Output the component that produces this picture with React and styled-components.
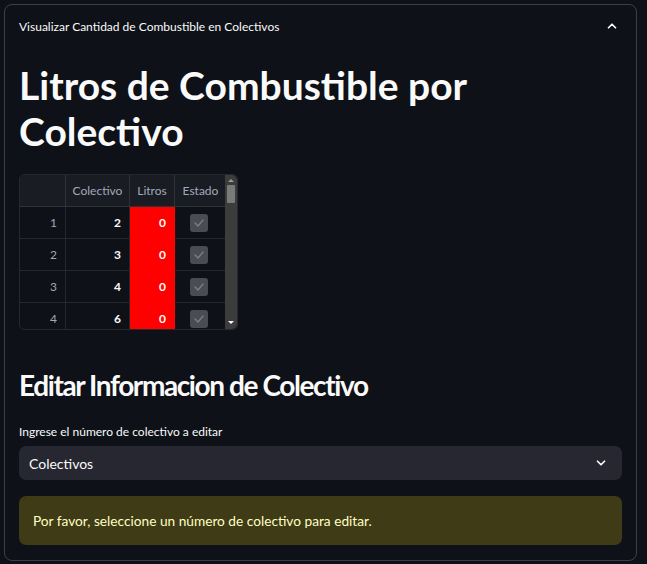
import React from 'react'
import styled, { createGlobalStyle } from 'styled-components'

const GlobalStyle = createGlobalStyle`
  html, body {
    margin: 0;
    padding: 0;
    background: #0e1117;
  }
  body {
    font-family: Lato, "Noto Sans", sans-serif;
    color: #fafafa;
  }
`

const rows = [
  { idx: 1, colectivo: 2, litros: 0 },
  { idx: 2, colectivo: 3, litros: 0 },
  { idx: 3, colectivo: 4, litros: 0 },
  { idx: 4, colectivo: 6, litros: 0 },
]

function ChevronUp() {
  return (
    <svg width="14" height="14" viewBox="0 0 24 24" fill="none" stroke="#fafafa" strokeWidth="3" strokeLinecap="round" strokeLinejoin="round">
      <polyline points="6 15 12 9 18 15" />
    </svg>
  )
}

function ChevronDown() {
  return (
    <svg width="14" height="14" viewBox="0 0 24 24" fill="none" stroke="#fafafa" strokeWidth="3" strokeLinecap="round" strokeLinejoin="round">
      <polyline points="6 9 12 15 18 9" />
    </svg>
  )
}

function CheckBox() {
  return (
    <Check>
      <svg width="12" height="12" viewBox="0 0 24 24" fill="none" stroke="#7d7f86" strokeWidth="2.5" strokeLinecap="round" strokeLinejoin="round">
        <polyline points="4 12 10 18 20 6" />
      </svg>
    </Check>
  )
}

export default function App() {
  return (
    <>
      <GlobalStyle />
      <Page>
        <Expander>
          <ExpanderHeader>
            <span>Visualizar Cantidad de Combustible en Colectivos</span>
            <ChevronUp />
          </ExpanderHeader>
          <ExpanderBody>
            <Title>Litros de Combustible por Colectivo</Title>
            <Table>
              <Grid>
                <HeadCell />
                <HeadCell>Colectivo</HeadCell>
                <HeadCell>Litros</HeadCell>
                <HeadCell>Estado</HeadCell>
                {rows.map(r => (
                  <React.Fragment key={r.idx}>
                    <IndexCell>{r.idx}</IndexCell>
                    <NumCell>{r.colectivo}</NumCell>
                    <NumCell $alert>{r.litros}</NumCell>
                    <CheckCell><CheckBox /></CheckCell>
                  </React.Fragment>
                ))}
              </Grid>
              <Scrollbar>
                <ArrowUp />
                <Thumb />
                <ArrowDown />
              </Scrollbar>
            </Table>
            <Subtitle>Editar Informacion de Colectivo</Subtitle>
            <Label>Ingrese el número de colectivo a editar</Label>
            <Select>
              <span>Colectivos</span>
              <ChevronDown />
            </Select>
            <Warning>Por favor, seleccione un número de colectivo para editar.</Warning>
          </ExpanderBody>
        </Expander>
      </Page>
    </>
  )
}

const Page = styled.div`
  padding: 4px 10px 0 4px;
`

const Expander = styled.div`
  border: 1px solid rgba(250, 250, 250, 0.2);
  border-radius: 8px;
  height: 557px;
  box-sizing: border-box;
  overflow: hidden;
`

const ExpanderHeader = styled.div`
  height: 42px;
  display: flex;
  align-items: center;
  justify-content: space-between;
  padding: 0 17px 0 14px;
  font-size: 12px;
  color: #fafafa;
`

const ExpanderBody = styled.div`
  padding: 15px 14px 0 14px;
`

const Title = styled.h1`
  margin: 0;
  font-size: 39px;
  font-weight: 700;
  line-height: 46px;
  color: #fafafa;
`

const Table = styled.div`
  margin-top: 20px;
  width: 219px;
  height: 156px;
  display: flex;
  border-radius: 5px;
  overflow: hidden;
  border: 1px solid rgba(250, 250, 250, 0.1);
  box-sizing: border-box;
`

const Grid = styled.div`
  display: grid;
  grid-template-columns: 46px 64px 45px 52px;
  grid-auto-rows: 32px;
  align-content: start;
  overflow: hidden;
`

const HeadCell = styled.div`
  background: #1a1c24;
  color: #a3a8b8;
  font-size: 12px;
  display: flex;
  align-items: center;
  justify-content: center;
  border-right: 1px solid rgba(250, 250, 250, 0.1);
  border-bottom: 1px solid rgba(250, 250, 250, 0.1);
`

const IndexCell = styled.div`
  color: #a3a8b8;
  font-size: 12px;
  display: flex;
  align-items: center;
  justify-content: flex-end;
  padding-right: 8px;
  border-right: 1px solid rgba(250, 250, 250, 0.1);
  border-bottom: 1px solid rgba(250, 250, 250, 0.1);
`

const NumCell = styled.div`
  background: ${p => (p.$alert ? '#ff0000' : 'transparent')};
  color: #fafafa;
  font-size: 12px;
  font-weight: 700;
  display: flex;
  align-items: center;
  justify-content: flex-end;
  padding-right: 8px;
  border-right: 1px solid ${p => (p.$alert ? '#ff0000' : 'rgba(250, 250, 250, 0.1)')};
  border-bottom: 1px solid ${p => (p.$alert ? '#ff0000' : 'rgba(250, 250, 250, 0.1)')};
`

const CheckCell = styled.div`
  display: flex;
  align-items: center;
  justify-content: center;
  padding-right: 3px;
  border-right: 1px solid rgba(250, 250, 250, 0.1);
  border-bottom: 1px solid rgba(250, 250, 250, 0.1);
`

const Check = styled.div`
  width: 18px;
  height: 18px;
  border-radius: 3px;
  background: #4a4c54;
  display: flex;
  align-items: center;
  justify-content: center;
`

const Scrollbar = styled.div`
  width: 12px;
  background: #3c3c3c;
  display: flex;
  flex-direction: column;
  align-items: center;
  border-radius: 0 5px 5px 0;
`

const Thumb = styled.div`
  width: 8px;
  height: 18px;
  margin-top: 3px;
  background: #7a7a7a;
  border-radius: 1px;
`

const ArrowUp = styled.div`
  margin-top: 4px;
  width: 0;
  height: 0;
  border-left: 3px solid transparent;
  border-right: 3px solid transparent;
  border-bottom: 3px solid #9a9a9a;
`

const ArrowDown = styled.div`
  margin-top: auto;
  margin-bottom: 5px;
  width: 0;
  height: 0;
  border-left: 3px solid transparent;
  border-right: 3px solid transparent;
  border-top: 3px solid #fafafa;
`

const Subtitle = styled.h2`
  margin: 35px 0 0;
  font-size: 28px;
  font-weight: 700;
  line-height: 40px;
  letter-spacing: -1.4px;
  color: #fafafa;
`

const Label = styled.div`
  margin-top: 19px;
  font-size: 12px;
  line-height: 15px;
  color: #fafafa;
`

const Select = styled.div`
  margin-top: 7px;
  height: 34px;
  background: #262730;
  border-radius: 7px;
  display: flex;
  align-items: center;
  justify-content: space-between;
  padding: 0 14px 0 10px;
  font-size: 14px;
  color: #fafafa;
`

const Warning = styled.div`
  margin-top: 16px;
  height: 49px;
  box-sizing: border-box;
  background: #3e3b16;
  border-radius: 7px;
  display: flex;
  align-items: center;
  padding: 0 14px;
  font-size: 13.7px;
  color: #ffffc2;
`
